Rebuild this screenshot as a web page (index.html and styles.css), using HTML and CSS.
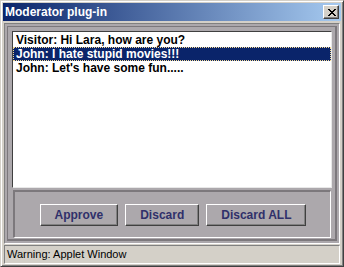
FILE: index.html
```html
<!DOCTYPE html>
<html>
<head>
<meta charset="utf-8">
<link rel="stylesheet" href="styles.css">
</head>
<body>
<div class="window">
  <div class="titlebar">
    <span class="title">Moderator plug-in</span>
    <span class="close">
      <svg width="8" height="7" viewBox="0 0 8 7" shape-rendering="crispEdges"><path fill="#000" d="M0 0h2v1H0z M6 0h2v1H6z M1 1h2v1H1z M5 1h2v1H5z M2 2h4v1H2z M3 3h2v1H3z M2 4h4v1H2z M1 5h2v1H1z M5 5h2v1H5z M0 6h2v1H0z M6 6h2v1H6z"/></svg>
    </span>
  </div>
  <div class="applet">
    <div class="frame">
      <ul class="list">
        <li class="item">Visitor: Hi Lara, how are you?</li>
        <li class="item sel">John: I hate stupid movies!!!</li>
        <li class="item">John: Let's have some fun.....</li>
      </ul>
      <div class="buttons">
        <span class="btn">Approve</span>
        <span class="btn">Discard</span>
        <span class="btn">Discard ALL</span>
      </div>
    </div>
  </div>
  <div class="status">Warning: Applet Window</div>
</div>
</body>
</html>
```
FILE: styles.css
```css
* { box-sizing: border-box; }
body {
  margin: 0;
  background: #d4d0c8;
  font-family: "Liberation Sans", Arial, sans-serif;
}
.window {
  width: 344px;
  height: 267px;
  background: #d4d0c8;
  border: 1px solid;
  border-color: #d4d0c8 #404040 #404040 #d4d0c8;
  box-shadow: inset 1px 1px #ffffff, inset -1px -1px #808080;
  padding: 2px;
  display: flex;
  flex-direction: column;
}
.titlebar {
  flex: none;
  height: 18px;
  background: linear-gradient(to right, #0a246a, #a6caf0);
  display: flex;
  align-items: center;
  justify-content: space-between;
  padding: 0 2px 0 2px;
}
.title {
  color: #ffffff;
  font-weight: bold;
  font-size: 12px;
  line-height: 14px;
}
.close {
  width: 16px;
  height: 14px;
  background: #d4d0c8;
  border: 1px solid;
  border-color: #ffffff #404040 #404040 #ffffff;
  box-shadow: inset -1px -1px #808080;
  display: flex;
  align-items: center;
  justify-content: center;
  padding-left: 1px;
}
.applet {
  flex: 1;
  margin: 2px 1px 0;
  background: #aca8ac;
  border: 1px solid;
  border-color: #808080 #ffffff #ffffff #808080;
  padding: 2px;
  display: flex;
}
.frame {
  flex: 1;
  border-style: solid;
  border-width: 1px 2px 2px 1px;
  border-color: #7c787c;
  padding: 4px 3px 1px 4px;
  display: flex;
  flex-direction: column;
}
.list {
  list-style: none;
  margin: 0;
  padding: 1px 0 0;
  height: 157px;
  flex: none;
  background: #ffffff;
  border: 1px solid;
  border-color: #404040 #e8e8e8 #e8e8e8 #404040;
  font-weight: bold;
  font-size: 12px;
}
.item {
  height: 14px;
  line-height: 12px;
  padding: 0 2px;
  border: 1px solid transparent;
  color: #000000;
  white-space: nowrap;
}
.sel {
  background: #0a246a;
  color: #ffffff;
  border: 1px dotted #f5db95;
}
.buttons {
  flex: 1;
  margin: 2px 1px 0;
  border-style: solid;
  border-width: 2px 1px 1px 2px;
  border-color: #7c787c #ffffff #ffffff #7c787c;
  display: flex;
  justify-content: center;
  align-items: center;
  gap: 7px;
  padding-left: 1px;
}
.btn {
  height: 22px;
  line-height: 20px;
  padding: 0 14px;
  background: #aca8ac;
  border: 1px solid;
  border-color: #ffffff #404040 #404040 #ffffff;
  box-shadow: inset -1px -1px #808080;
  font-weight: bold;
  font-size: 12px;
  color: #30306a;
}
.status {
  flex: none;
  height: 19px;
  margin: 1px 1px 0;
  border: 1px solid;
  border-color: #808080 #ffffff #ffffff #808080;
  padding-left: 2px;
  font-size: 11px;
  line-height: 17px;
  color: #000000;
}
```
